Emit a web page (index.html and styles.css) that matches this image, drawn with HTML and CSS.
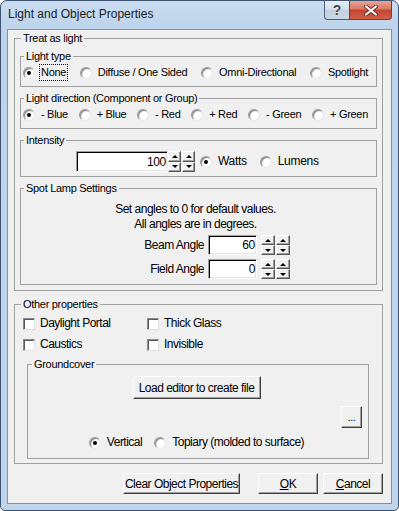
FILE: index.html
```html
<!DOCTYPE html>
<html lang="en">
<head>
  <meta charset="UTF-8" />
  <title>Light and Object Properties</title>
  <link rel="stylesheet" href="styles.css">
</head>
<body>
  <div class="window">
    <div class="titlebar">
      <span class="title">Light and Object Properties</span>
      <div class="caps">
        <span class="cap help">?</span>
        <span class="cap close">
          <svg width="14" height="11" viewBox="0 0 14 11">
            <path d="M2 1.5 L12 9.5 M12 1.5 L2 9.5" stroke="#6b2a22" stroke-width="4" stroke-linecap="round"/>
            <path d="M2 1.5 L12 9.5 M12 1.5 L2 9.5" stroke="#fff" stroke-width="2.2" stroke-linecap="round"/>
          </svg>
        </span>
      </div>
    </div>

    <div class="client">
      <fieldset class="group outer">
        <legend>Treat as light</legend>

        <fieldset class="group inner">
          <legend>Light type</legend>
          <div class="spread">
            <span class="radio checked"><span class="rb"></span><span class="focus">None</span></span>
            <span class="radio"><span class="rb"></span>Diffuse / One Sided</span>
            <span class="radio"><span class="rb"></span>Omni-Directional</span>
            <span class="radio"><span class="rb"></span>Spotlight</span>
          </div>
        </fieldset>

        <fieldset class="group inner">
          <legend>Light direction (Component or Group)</legend>
          <div class="spread">
            <span class="radio checked"><span class="rb"></span>- Blue</span>
            <span class="radio"><span class="rb"></span>+ Blue</span>
            <span class="radio"><span class="rb"></span>- Red</span>
            <span class="radio"><span class="rb"></span>+ Red</span>
            <span class="radio"><span class="rb"></span>- Green</span>
            <span class="radio"><span class="rb"></span>+ Green</span>
          </div>
        </fieldset>

        <fieldset class="group inner intensity-box">
          <legend>Intensity</legend>
          <div class="intensity">
            <span class="field wide">100</span>
            <span class="spin">
              <span class="sbtn up"></span><span class="sbtn up"></span>
              <span class="sbtn down"></span><span class="sbtn down"></span>
            </span>
            <span class="radio checked watts"><span class="rb"></span>Watts</span>
            <span class="radio lumens"><span class="rb"></span>Lumens</span>
          </div>
        </fieldset>

        <fieldset class="group inner spot">
          <legend>Spot Lamp Settings</legend>
          <p class="note">Set angles to 0 for default values.<br>All angles are in degrees.</p>
          <div class="spot-row">
            <span class="spot-label">Beam Angle</span>
            <span class="field small">60</span>
            <span class="spin narrow">
              <span class="sbtn up"></span><span class="sbtn up"></span>
              <span class="sbtn down"></span><span class="sbtn down"></span>
            </span>
          </div>
          <div class="spot-row">
            <span class="spot-label">Field Angle</span>
            <span class="field small">0</span>
            <span class="spin narrow">
              <span class="sbtn up"></span><span class="sbtn up"></span>
              <span class="sbtn down"></span><span class="sbtn down"></span>
            </span>
          </div>
        </fieldset>
      </fieldset>

      <fieldset class="group outer other">
        <legend>Other properties</legend>
        <div class="checks">
          <span class="check"><span class="cb"></span>Daylight Portal</span>
          <span class="check"><span class="cb"></span>Thick Glass</span>
          <span class="check"><span class="cb"></span>Caustics</span>
          <span class="check"><span class="cb"></span>Invisible</span>
        </div>

        <fieldset class="group ground">
          <legend>Groundcover</legend>
          <button class="btn load">Load editor to create file</button>
          <button class="btn dots">...</button>
          <div class="ground-radios">
            <span class="radio checked"><span class="rb"></span>Vertical</span>
            <span class="radio"><span class="rb"></span>Topiary (molded to surface)</span>
          </div>
        </fieldset>
      </fieldset>

      <div class="dialog-buttons">
        <button class="btn clear">Clear Object Properties</button>
        <button class="btn ok"><u>O</u>K</button>
        <button class="btn cancel"><u>C</u>ancel</button>
      </div>
    </div>
  </div>
</body>
</html>
```

FILE: styles.css
```css
body {
  margin: 0;
  font-family: "Liberation Sans", Arial, sans-serif;
  font-size: 11px;
  letter-spacing: -0.3px;
  color: #000;
  background: #fff;
}
.window {
  width: 399px;
  height: 511px;
  box-sizing: border-box;
  border: 1px solid #3d536f;
  border-radius: 7px 7px 5px 5px;
  background: linear-gradient(180deg, #cadcf0 0, #bcd3eb 28px, #c1d6ed 100%);
  padding: 0 6px 6px;
  display: flex;
  flex-direction: column;
}
.titlebar {
  height: 28px;
  display: flex;
  align-items: flex-start;
}
.title {
  margin: 6px 0 0 1px;
  font-size: 12px;
  line-height: 14px;
  letter-spacing: 0;
  color: #1b1b1b;
}
.caps {
  margin-left: auto;
  display: flex;
}
.cap {
  height: 19px;
  box-sizing: border-box;
  border: 1px solid #4f5f75;
  border-top: 0;
  display: flex;
  align-items: center;
  justify-content: center;
}
.help {
  width: 25px;
  border-right: 0;
  border-radius: 0 0 0 4px;
  background: linear-gradient(180deg, #e7edf4 0, #d3dde9 50%, #c2cfdd 51%, #ccd8e5 100%);
  color: #3c4756;
  font-size: 14px;
  font-weight: bold;
  text-shadow: 0 0 2px #fff;
}
.close {
  width: 43px;
  border-radius: 0 0 4px 0;
  background: linear-gradient(180deg, #e8a597 0, #d87863 45%, #c2452e 50%, #d0604a 100%);
  border-color: #7a3a33;
}
.close svg {
  display: block;
}
.client {
  flex: 1;
  border: 1px solid #7f92ab;
  background: #f0f0f0;
  padding: 2px 8px 0 6px;
  display: flex;
  flex-direction: column;
}

/* group boxes */
.group {
  margin: 0;
  border: 1px solid #a0a0a0;
  min-width: 0;
}
.group legend {
  padding: 0 2px;
  line-height: 13px;
}
.outer {
  padding: 5px 5px 5px 5px;
}
.outer legend {
  margin-left: 1px;
}
.inner {
  padding: 3px 8px 7px 2px;
  margin-bottom: 5px;
}
.inner:last-child {
  margin-bottom: 0;
}
.spread {
  display: flex;
  justify-content: space-between;
}
.radio, .check {
  display: inline-flex;
  align-items: center;
  gap: 6px;
  white-space: nowrap;
  line-height: 13px;
}
.rb {
  width: 12px;
  height: 12px;
  box-sizing: border-box;
  border-radius: 50%;
  background: #fff;
  border: 1px solid;
  border-color: #9a9a9a #e8e8e8 #e8e8e8 #9a9a9a;
  box-shadow: inset 1px 1px 1px #7a7a7a;
  position: relative;
}
.checked .rb::after {
  content: "";
  position: absolute;
  left: 3px;
  top: 3px;
  width: 4px;
  height: 4px;
  border-radius: 50%;
  background: #000;
}
.focus {
  outline: 1px dotted #000;
  outline-offset: 1px;
}

/* spin fields */
.intensity-box {
  padding-top: 4px;
  padding-bottom: 4px;
}
.intensity {
  display: flex;
  align-items: center;
  padding-left: 53px;
}
.field {
  box-sizing: border-box;
  background: #fff;
  border: 1px solid;
  border-color: #a0a0a0 #fff #fff #a0a0a0;
  box-shadow: inset 1px 1px 0 #000, inset -1px -1px 0 #e3e3e3;
  padding: 0 1px 0 0;
  display: flex;
  align-items: center;
  justify-content: flex-end;
  font-size: 12px;
}
.wide {
  width: 92px;
  height: 21px;
}
.small {
  width: 49px;
  height: 20px;
}
.spin {
  display: grid;
  grid-template-columns: 13px 13px;
  grid-template-rows: 1fr 1fr;
  height: 21px;
  gap: 0 1px;
}
.spin.narrow {
  grid-template-columns: 14px 14px;
  height: 20px;
}
.sbtn {
  box-sizing: border-box;
  border: 1px solid;
  border-color: #fff #555 #555 #fff;
  box-shadow: inset -1px -1px 0 #a0a0a0;
  background: #f0f0f0;
  display: flex;
  align-items: center;
  justify-content: center;
}
.sbtn::after {
  content: "";
  border-left: 3px solid transparent;
  border-right: 3px solid transparent;
}
.up::after {
  border-bottom: 3px solid #000;
}
.down::after {
  border-top: 3px solid #000;
}
.watts {
  margin-left: 5px;
  font-size: 12px;
}
.lumens {
  margin-left: 13px;
  font-size: 12px;
}
.note {
  margin: 4px 0 3px;
  text-align: center;
  line-height: 15px;
  font-size: 12px;
  letter-spacing: -0.5px;
}
.spot {
  padding-bottom: 5px;
}
.spot-row {
  display: flex;
  align-items: center;
  gap: 4px;
}
.spot-row + .spot-row {
  margin-top: 4px;
}
.spot-label {
  width: 181px;
  text-align: right;
  font-size: 12px;
  letter-spacing: -0.5px;
}

/* other properties */
.other {
  margin-top: 7px;
  padding: 6px 5px 4px 5px;
}
.checks {
  display: grid;
  grid-template-columns: 124px auto;
  row-gap: 8px;
  padding-left: 3px;
}
.check {
  gap: 5px;
  font-size: 12px;
  letter-spacing: -0.5px;
}
.cb {
  width: 12px;
  height: 12px;
  box-sizing: border-box;
  background: #fff;
  border: 1px solid;
  border-color: #8a8a8a #e0e0e0 #e0e0e0 #8a8a8a;
  box-shadow: inset 1px 1px 0 #5a5a5a;
}
.ground {
  margin: 7px 8px 0 7px;
  padding: 5px 6px 9px 3px;
  display: flex;
  flex-direction: column;
}
.btn {
  font-family: "Liberation Sans", Arial, sans-serif;
  font-size: 12px;
  letter-spacing: -0.5px;
  white-space: nowrap;
  color: #000;
  background: #f0f0f0;
  border: 1px solid;
  border-color: #fff #404040 #404040 #fff;
  box-shadow: inset -1px -1px 0 #a0a0a0;
  padding: 0;
  margin: 0;
}
.load {
  align-self: center;
  width: 128px;
  height: 23px;
}
.dots {
  align-self: flex-end;
  width: 21px;
  height: 22px;
  margin-top: 7px;
  font-size: 11px;
}
.ground-radios {
  margin-top: 8px;
  display: flex;
  justify-content: center;
  gap: 12px;
  font-size: 12px;
  letter-spacing: -0.5px;
}
.dialog-buttons {
  margin-top: 9px;
  display: flex;
  justify-content: flex-end;
}
.dialog-buttons .btn {
  height: 21px;
}
.clear {
  width: 117px;
}
.ok {
  width: 60px;
  margin-left: 18px;
}
.cancel {
  width: 60px;
  margin-left: 5px;
}
```
